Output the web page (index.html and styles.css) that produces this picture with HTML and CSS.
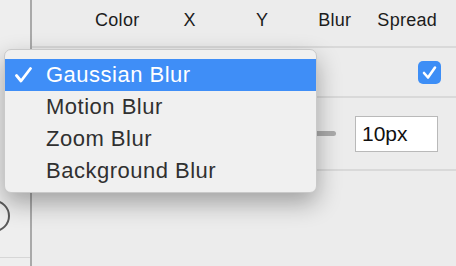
FILE: index.html
```html
<!DOCTYPE html>
<html lang="en">
<head>
    <meta charset="UTF-8">
    <meta name="viewport" content="width=device-width, initial-scale=1.0">
    <title>Shadow options</title>
    <link rel="stylesheet" href="styles.css">
</head>
<body>

    <div class="panel">
        <div class="sidebar">
            <div class="knob"></div>
            <div class="side-line"></div>
        </div>

        <div class="content">
            <div class="header">
                <span class="col">Color</span>
                <span class="col">X</span>
                <span class="col">Y</span>
                <span class="col">Blur</span>
                <span class="col">Spread</span>
            </div>

            <div class="row row-check">
                <span class="checkbox">
                    <svg width="23" height="23" viewBox="0 0 23 23">
                        <polyline points="6,12 10,16.5 17,6.5" fill="none" stroke="#fff" stroke-width="2.6" stroke-linecap="round" stroke-linejoin="round"/>
                    </svg>
                </span>
            </div>

            <div class="row row-slider">
                <div class="track"></div>
                <div class="value">10px</div>
            </div>
        </div>
    </div>

    <!-- blur type popup, open over the panel -->
    <div class="menu">
        <div class="item selected">
            <svg class="tick" width="17" height="16" viewBox="0 0 17 16">
                <polyline points="1.5,8.5 6,14 15.5,1.5" fill="none" stroke="#fff" stroke-width="2.8" stroke-linecap="round" stroke-linejoin="round"/>
            </svg>
            Gaussian Blur
        </div>
        <div class="item">Motion Blur</div>
        <div class="item">Zoom Blur</div>
        <div class="item">Background Blur</div>
    </div>

</body>
</html>
```

FILE: styles.css
```css
* {
    margin: 0;
    padding: 0;
    box-sizing: border-box;
}

body {
    width: 456px;
    height: 266px;
    overflow: hidden;
    background-color: #ececec;
    font-family: 'Liberation Sans', Arial, sans-serif;
    position: relative;
}

.panel {
    display: flex;
    height: 266px;
}

/* left strip */
.sidebar {
    width: 32px;
    flex-shrink: 0;
    background-color: #eeeeee;
    border-right: 2px solid #a9a9a9;
    padding-top: 200px;
}

.knob {
    width: 32px;
    height: 32px;
    margin-left: -22px;
    border: 2px solid #5a5a5a;
    border-radius: 50%;
}

.side-line {
    margin-top: 25px;
    border-top: 1px solid #d6d6d6;
}

.content {
    flex: 1;
}

.header {
    height: 48px;
    display: flex;
    align-items: center;
    padding-left: 49px;
    padding-bottom: 6px;
    border-bottom: 2px solid #d9d9d9;
    font-size: 18px;
    letter-spacing: 0.3px;
    color: #1c1c1c;
}

.col {
    width: 72.5px;
    text-align: center;
}

.row {
    display: flex;
    align-items: center;
    justify-content: flex-end;
    padding-right: 15px;
    border-bottom: 2px solid #d9d9d9;
}

.row-check {
    height: 50px;
}

.checkbox {
    width: 23px;
    height: 23px;
    border-radius: 5px;
    background-color: #3d8ef6;
    display: block;
}

.checkbox svg {
    display: block;
}

.row-slider {
    height: 73px;
    padding-right: 18px;
    gap: 19px;
}

.track {
    flex: 1;
    height: 5px;
    border-radius: 3px;
    background-color: #ababab;
}

.value {
    width: 83px;
    height: 36px;
    background-color: #ffffff;
    border: 1px solid #b9b9b9;
    font-size: 21px;
    color: #111;
    padding-left: 6px;
    line-height: 34px;
}

/* popup menu */
.menu {
    position: absolute;
    left: 4px;
    top: 49px;
    width: 313px;
    height: 144px;
    padding-top: 9px;
    background-color: #f0f0f0;
    border: 1px solid #c9c9c9;
    border-radius: 7px;
    box-shadow: 0 10px 24px rgba(0, 0, 0, 0.32);
    overflow: hidden;
}

.item {
    height: 32px;
    line-height: 32px;
    padding-left: 41px;
    font-size: 22px;
    letter-spacing: 0.5px;
    color: #303030;
    position: relative;
}

.item.selected {
    background-color: #3f8ef7;
    color: #ffffff;
}

.tick {
    position: absolute;
    left: 10px;
    top: 8px;
}
```
